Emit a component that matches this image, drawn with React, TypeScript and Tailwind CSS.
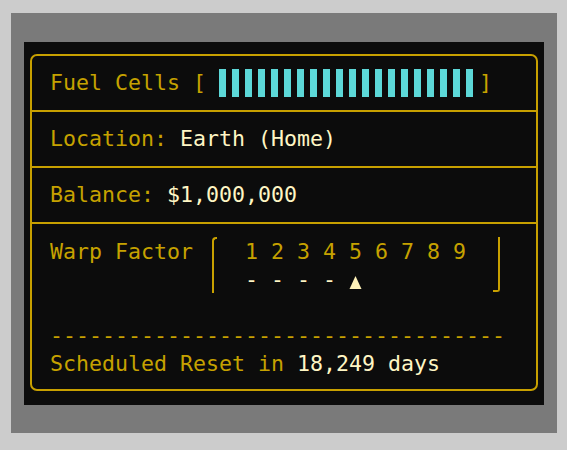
import React from 'react';

// 燃料格數
const FUEL_CELLS = 20;

const gold = 'text-[#c6a200]';
const cream = 'text-[#fff6c4]';

export default function App() {
    return (
        <div className="min-h-[450px] bg-[#cccccc] pt-[13px] pl-[11px] pr-[10px]">
            <div className="bg-[#7a7a7a] px-[13px] pt-[29px] pb-[28px]">
                <div className="bg-[#0c0c0c] pl-[6px] pr-[6px] pt-[12px] pb-[14px]">
                    <div
                        className={`border-2 border-[#c8a000] rounded-[7px] font-['DejaVu_Sans_Mono',monospace] text-[21.6px] leading-[28px] ${gold}`}
                    >
                        {/* 燃料 */}
                        <div className="flex items-center pl-[18px] py-[13px] whitespace-pre">
                            <span>Fuel Cells [ </span>
                            <div className="flex">
                                {Array.from({ length: FUEL_CELLS }).map((_, i) => (
                                    <div key={i} className="w-[13px] h-[28px]">
                                        <div className="w-[7px] h-[28px] bg-[#5cd8d8]" />
                                    </div>
                                ))}
                            </div>
                            <span>]</span>
                        </div>

                        {/* 位置 */}
                        <div className="border-t-2 border-[#c8a000] pl-[18px] py-[13px] whitespace-pre">
                            Location: <span className={cream}>Earth (Home)</span>
                        </div>

                        {/* 餘額 */}
                        <div className="border-t-2 border-[#c8a000] pl-[18px] py-[13px] whitespace-pre">
                            Balance: <span className={cream}>$1,000,000</span>
                        </div>

                        {/* 曲速 + 重置 */}
                        <div className="border-t-2 border-[#c8a000] pl-[18px] pt-[14px] pb-[11px] whitespace-pre">
                            <div className="flex items-start">
                                <span className="w-[162px]">Warp Factor</span>
                                <div className="w-[5px] h-[56px] -mt-px border-l-2 border-t-2 border-[#c8a000] rounded-tl-[4px]" />
                                <div className="ml-[28px] w-[221px]">
                                    <div>1 2 3 4 5 6 7 8 9</div>
                                    <div className="flex items-center h-[28px]">
                                        <span className={cream}>- - - - </span>
                                        <svg width="13" height="28" viewBox="0 0 13 28" className="block">
                                            <polygon points="6.5,10 12.5,23 0.5,23" fill="#fff2b8" />
                                        </svg>
                                    </div>
                                </div>
                                <div className="ml-[27px] w-[7px] h-[55px] -mt-px border-r-2 border-b-2 border-[#c8a000] rounded-br-[3px]" />
                            </div>
                            <div className="h-[28px]" />
                            <div>{'-'.repeat(35)}</div>
                            <div>
                                Scheduled Reset in <span className={cream}>18,249 days</span>
                            </div>
                        </div>
                    </div>
                </div>
            </div>
        </div>
    );
}
